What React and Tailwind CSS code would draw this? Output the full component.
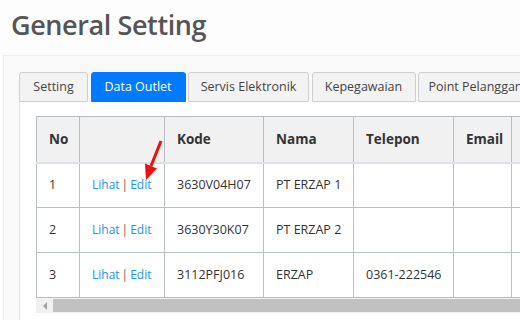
import React from "react";

const tabs = [
  { label: "Setting", w: "w-[69px]" },
  { label: "Data Outlet", w: "w-[95px]" },
  { label: "Servis Elektronik", w: "w-[121px]" },
  { label: "Kepegawaian", w: "w-[104px]" },
  { label: "Point Pelanggan", w: "w-[115px]" },
];

const rows = [
  { no: 1, kode: "3630V04H07", nama: "PT ERZAP 1", telp: "" },
  { no: 2, kode: "3630Y30K07", nama: "PT ERZAP 2", telp: "" },
  { no: 3, kode: "3112PFJ016", nama: "ERZAP", telp: "0361-222546" },
];

const cols = [
  { label: "No", w: "w-[43px]" },
  { label: "", w: "w-[85px]" },
  { label: "Kode", w: "w-[99px]" },
  { label: "Nama", w: "w-[90px]" },
  { label: "Telepon", w: "w-[100px]" },
  { label: "Email", w: "w-[58px]" },
  { label: "Alamat", w: "w-[120px]" },
];

const cell = "border border-[#b9bec3] px-[12px] whitespace-nowrap overflow-hidden";

export default function App() {
  return (
    <div
      className="relative w-[520px] h-[320px] overflow-hidden bg-[#fdfdfd] text-[#333]"
      style={{ fontFamily: '"Open Sans", "Noto Sans", sans-serif' }}
    >
      <h1 className="pl-[11px] pt-[5px] h-[55px] text-[27px] font-semibold text-[#555] tracking-[-0.4px] whitespace-nowrap">
        General Setting
      </h1>

      {/* card */}
      <div className="ml-[3px] w-[600px] h-[280px] bg-[#f9f9f9] border-t border-l border-[#eee] pt-[16px] pl-[15px]">
        {/* tabs */}
        <div className="flex gap-[2.5px] h-[30px] text-[12.5px]">
          {tabs.map((t, i) => (
            <div
              key={t.label}
              className={`${t.w} shrink-0 whitespace-nowrap rounded-t-[3px] border flex items-center justify-center ${
                i === 1
                  ? "bg-[#007bff] border-[#007bff] text-white"
                  : "bg-[#f3f3f3] border-[#cfcfcf] text-[#444]"
              }`}
            >
              {t.label}
            </div>
          ))}
        </div>

        {/* tab panel */}
        <div className="bg-white border-l border-[#e2e2e2] pt-[14px] pl-[16px] h-[250px]">
          <div className="w-[595px]">
            <table className="table-fixed w-[595px] border-collapse text-[12.5px]">
              <colgroup>
                {cols.map((c, i) => (
                  <col key={i} className={c.w} />
                ))}
              </colgroup>
              <thead>
                <tr className="bg-[#f1f1f1] h-[46px]">
                  {cols.map((c, i) => (
                    <th
                      key={i}
                      className={`${cell} border-b-2 border-b-[#dee2e6] text-left font-bold text-[13.5px]`}
                    >
                      {c.label}
                    </th>
                  ))}
                </tr>
              </thead>
              <tbody>
                {rows.map((r) => (
                  <tr key={r.no} className="h-[45px]">
                    <td className={cell}>{r.no}</td>
                    <td className={`${cell} text-[12px]`}>
                      <span className="text-[#2196e8]">Lihat</span>
                      <span className="text-[#a94442] mx-[2px]">|</span>
                      <span className="text-[#2196e8]">Edit</span>
                    </td>
                    <td className={cell}>{r.kode}</td>
                    <td className={cell}>{r.nama}</td>
                    <td className={cell}>{r.telp}</td>
                    <td className={cell}></td>
                    <td className={cell}></td>
                  </tr>
                ))}
              </tbody>
            </table>

            {/* horizontal scrollbar */}
            <div className="flex h-[15px] bg-[#f1f1f1]">
              <div className="w-[17px] flex items-center justify-center">
                <div className="w-0 h-0 border-y-[4px] border-y-transparent border-r-[4px] border-r-[#a3a3a3]" />
              </div>
              <div className="flex-1 my-[1px] bg-[#c1c1c1]" />
            </div>
          </div>
        </div>
      </div>

      {/* red arrow annotation */}
      <svg className="absolute left-0 top-0 pointer-events-none" width="520" height="320">
        <line x1="161" y1="141" x2="151" y2="166" stroke="#f01010" strokeWidth="3" />
        <polygon points="157,168.5 145,163.5 146,180" fill="#f01010" />
      </svg>
    </div>
  );
}
